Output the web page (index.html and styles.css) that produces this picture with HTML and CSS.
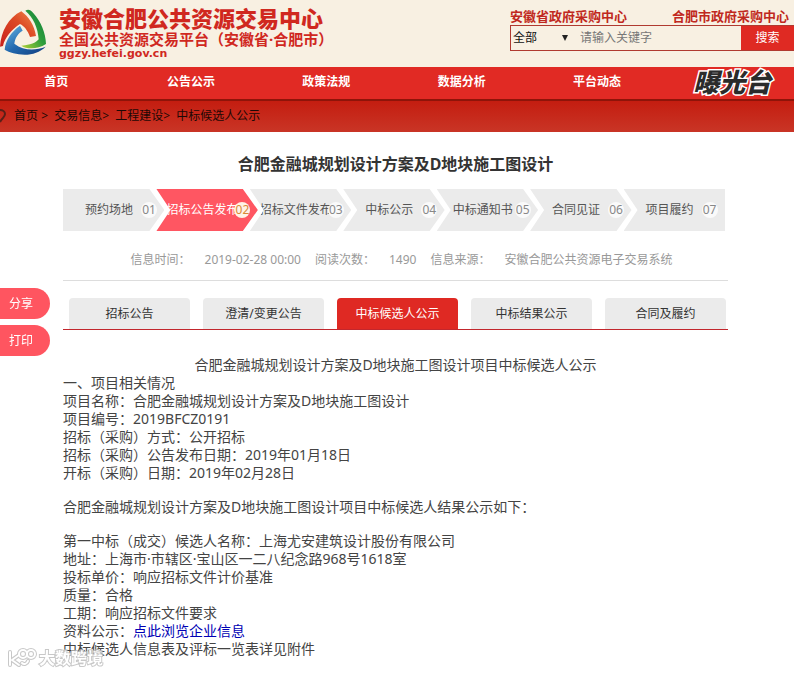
FILE: index.html
```
<!DOCTYPE html>
<html lang="zh-CN">
<head>
    <meta charset="UTF-8">
    <meta name="viewport" content="width=device-width, initial-scale=1.0">
    <title>安徽合肥公共资源交易中心</title>
    <link rel="stylesheet" href="styles.css">
</head>
<body>
    <header class="header">
        <a class="brand" href="#">
            <svg class="logo" viewBox="0 22 141 144" aria-hidden="true">
                <defs>
                    <linearGradient id="red" x1="0" y1="1" x2="1" y2="0">
                        <stop offset="0" stop-color="#c8201c"/>
                        <stop offset="0.6" stop-color="#dd4a25"/>
                        <stop offset="1" stop-color="#f08a4a"/>
                    </linearGradient>
                    <linearGradient id="green" x1="0" y1="1" x2="1" y2="0">
                        <stop offset="0" stop-color="#b5d334"/>
                        <stop offset="0.5" stop-color="#2f9e3c"/>
                        <stop offset="1" stop-color="#0b7a3c"/>
                    </linearGradient>
                    <linearGradient id="blue" x1="0" y1="0" x2="1" y2="1">
                        <stop offset="0" stop-color="#69b6e4"/>
                        <stop offset="0.5" stop-color="#2268ae"/>
                        <stop offset="1" stop-color="#123c7e"/>
                    </linearGradient>
                </defs>
                <path fill="url(#red)" d="M0 138C3 92 26 50 64 32C86 48 103 74 108 106L90 109C84 90 72 76 60 70C36 86 14 110 9 136Z"/>
                <path fill="url(#green)" d="M76 30C84 24 92 27 99 36C124 64 137 96 138 130C112 147 80 146 64 135C76 134 104 132 116 116C114 82 100 50 76 30Z"/>
                <path fill="url(#blue)" d="M14 147C16 120 34 92 60 75L68 90C54 98 45 112 43 129C72 151 106 150 137 138C120 154 98 162 74 162C50 161 28 156 14 147Z"/>
            </svg>
            <span class="brand-text">
                <strong class="brand-name">安徽合肥公共资源交易中心</strong>
                <span class="brand-sub">全国公共资源交易平台（安徽省·合肥市）</span>
                <span class="brand-url">ggzy.hefei.gov.cn</span>
            </span>
        </a>
        <div class="header-right">
            <div class="centers">
                <a href="#">安徽省政府采购中心</a>
                <a href="#">合肥市政府采购中心</a>
            </div>
            <form class="search">
                <div class="select-wrap">
                    <select aria-label="搜索范围">
                        <option>全部</option>
                    </select>
                </div>
                <input type="text" placeholder="请输入关键字" aria-label="关键字">
                <button type="button">搜索</button>
            </form>
        </div>
    </header>

    <nav class="nav">
        <a href="#">首页</a>
        <a href="#">公告公示</a>
        <a href="#">政策法规</a>
        <a href="#">数据分析</a>
        <a href="#">平台动态</a>
        <a class="expose" href="#">曝光台</a>
    </nav>

    <div class="crumbs">
        <svg class="pin" viewBox="0 0 6 14" aria-hidden="true">
            <path d="M0 1C3 1 5 3 5 5C5 8 2 9 0 13" fill="none" stroke="#5a2018" stroke-width="2"/>
        </svg>
        <div><a href="#">首页</a> <span class="sep">&gt;</span><a href="#">交易信息</a><span class="sep">&gt;</span><a href="#">工程建设</a><span class="sep">&gt;</span><a href="#">中标候选人公示</a></div>
    </div>

    <main class="main">
        <h1>合肥金融城规划设计方案及D地块施工图设计</h1>

        <!-- 流程步骤 -->
        <ol class="steps">
            <li><span class="label">预约场地</span><span class="no">01</span></li>
            <li class="active"><span class="label">招标公告发布</span><span class="no">02</span></li>
            <li><span class="label">招标文件发布</span><span class="no">03</span></li>
            <li><span class="label">中标公示</span><span class="no">04</span></li>
            <li><span class="label">中标通知书</span><span class="no">05</span></li>
            <li><span class="label">合同见证</span><span class="no">06</span></li>
            <li><span class="label">项目履约</span><span class="no">07</span></li>
        </ol>

        <div class="info">
            <span>信息时间：</span><span>2019-02-28 00:00</span>
            <span>阅读次数：</span><span>1490</span>
            <span>信息来源：</span><span>安徽合肥公共资源电子交易系统</span>
        </div>

        <div class="tabs">
            <button type="button">招标公告</button>
            <button type="button">澄清/变更公告</button>
            <button type="button" class="active">中标候选人公示</button>
            <button type="button">中标结果公示</button>
            <button type="button">合同及履约</button>
        </div>

        <article class="content">
            <h2>合肥金融城规划设计方案及D地块施工图设计项目中标候选人公示</h2>
            <p>
                一、项目相关情况<br>
                项目名称：合肥金融城规划设计方案及D地块施工图设计<br>
                项目编号：2019BFCZ0191<br>
                招标（采购）方式：公开招标<br>
                招标（采购）公告发布日期：2019年01月18日<br>
                开标（采购）日期：2019年02月28日
            </p>
            <p>合肥金融城规划设计方案及D地块施工图设计项目中标候选人结果公示如下：</p>
            <p>
                第一中标（成交）候选人名称：上海尤安建筑设计股份有限公司<br>
                地址：上海市·市辖区·宝山区一二八纪念路968号1618室<br>
                投标单价：响应招标文件计价基准<br>
                质量：合格<br>
                工期：响应招标文件要求<br>
                资料公示：<a href="#">点此浏览企业信息</a><br>
                中标候选人信息表及评标一览表详见附件
            </p>
        </article>
    </main>

    <div class="side">
        <button type="button">分享</button>
        <button type="button">打印</button>
    </div>

    <div class="watermark">
        <svg viewBox="0 0 30 22" aria-hidden="true">
            <g fill="none" stroke-linecap="round" stroke-linejoin="round">
                <g stroke="#bbb" stroke-width="4">
                    <path d="M3 5V18M12 8L5 13L12 18"/>
                    <circle cx="16" cy="7" r="4"/>
                    <circle cx="24" cy="7" r="4"/>
                    <path d="M15 16C17 18 20 17 21 14"/>
                </g>
                <g stroke="#fff" stroke-width="2">
                    <path d="M3 5V18M12 8L5 13L12 18"/>
                    <circle cx="16" cy="7" r="4"/>
                    <circle cx="24" cy="7" r="4"/>
                    <path d="M15 16C17 18 20 17 21 14"/>
                </g>
            </g>
        </svg>
        <span>大数跨境</span>
    </div>
</body>
</html>
```
FILE: styles.css
```
* {
    box-sizing: border-box;
}

body {
    margin: 0;
    min-height: 100vh;
    background: #fff;
    color: #444;
    font-family: "Noto Sans", "Noto Sans CJK SC", sans-serif;
    font-size: 12px;
    line-height: 18px;
    overflow-x: hidden;
}

a {
    color: inherit;
    text-decoration: none;
}

button, input, select {
    font: inherit;
    border: 0;
    padding: 0;
    margin: 0;
    background: none;
}

button {
    cursor: pointer;
}

/* 页头 */
.header {
    display: flex;
    justify-content: space-between;
    height: 67px;
    background: #f8f0e2;
}

.brand {
    display: flex;
    gap: 12px;
    padding-top: 7px;
    color: #d0281f;
    white-space: nowrap;
}

.logo {
    width: 47px;
    height: 48px;
    margin-top: 1px;
}

.brand-text {
    display: flex;
    flex-direction: column;
    font-weight: 700;
}

.brand-name {
    font-size: 22px;
    font-weight: 900;
    line-height: 23px;
}

.brand-sub {
    font-size: 15px;
    line-height: 18px;
}

.brand-url {
    font-family: "DejaVu Sans", sans-serif;
    font-size: 11px;
    line-height: 11px;
}

.header-right {
    width: 284px;
    padding-top: 8px;
}

.centers {
    display: flex;
    gap: 45px;
    height: 17px;
    line-height: 17px;
    font-size: 13px;
    font-weight: 700;
    color: #c02820;
    white-space: nowrap;
}

.search {
    display: flex;
    height: 26px;
    border: 1px solid #b03a30;
    border-right: 0;
}

.select-wrap {
    position: relative;
    width: 68px;
}

.select-wrap::after {
    content: "";
    position: absolute;
    top: 9px;
    right: 11px;
    border: 3px solid transparent;
    border-top: 6px solid #222;
    border-bottom: 0;
    pointer-events: none;
}

.search select {
    appearance: none;
    width: 100%;
    height: 100%;
    padding-left: 2px;
    color: #111;
}

.search input {
    flex: 1;
    min-width: 0;
    padding-left: 1px;
    color: #333;
}

.search input::placeholder {
    color: #777;
}

.search button {
    width: 53px;
    background: #df2a23;
    color: #fff;
}

/* 导航 */
.nav {
    display: flex;
    height: 32px;
    margin-right: -6px;
    background: #e12a24;
    color: #fff;
    font-weight: 700;
    line-height: 30px;
    text-align: center;
}

.nav a {
    flex: 1 1 135px;
}

.nav a:first-child {
    flex: 1 1 112px;
    margin-right: 11px;
}

.nav .expose {
    color: #2b2b2b;
    font-size: 26px;
    font-style: italic;
    font-weight: 900;
    white-space: nowrap;
    -webkit-text-stroke: 3px #fff;
    paint-order: stroke fill;
}

.crumbs {
    display: flex;
    align-items: center;
    gap: 8px;
    height: 33px;
    padding-bottom: 2px;
    border-top: 2px solid #8e1409;
    background: linear-gradient(#c41d10, #c93526);
    color: #1e0805;
}

.pin {
    width: 6px;
    height: 14px;
}

.sep {
    display: inline-block;
    width: 13px;
}

/* 正文 */
.main {
    padding: 20px 66px 16px 63px;
}

h1 {
    margin: 0 0 13px;
    color: #333;
    font-size: 16px;
    line-height: 24px;
    text-align: center;
}

.steps {
    display: flex;
    margin: 0 3px 0 0;
    padding: 0;
    list-style: none;
}

.steps li {
    display: flex;
    flex: 1;
    align-items: center;
    height: 42px;
    margin-left: -8px;
    padding-left: 10px;
    background: #ebebeb;
    color: #555;
    white-space: nowrap;
    clip-path: polygon(0 0, calc(100% - 15px) 0, 100% 50%, calc(100% - 15px) 100%, 0 100%, 14px 50%);
}

.steps li:first-child {
    margin-left: 0;
    clip-path: polygon(0 0, calc(100% - 15px) 0, 100% 50%, calc(100% - 15px) 100%, 0 100%);
}

.steps li:last-child {
    clip-path: polygon(0 0, 100% 0, 100% 100%, 0 100%, 14px 50%);
}

.steps .label {
    width: 72px;
    margin-right: -4px;
    text-align: center;
}

.steps .no {
    width: 16px;
    height: 16px;
    border-radius: 50%;
    background: #fafafa;
    color: #888;
    line-height: 16px;
    text-align: center;
}

.steps .active {
    background: #ff5662;
    color: #fff;
}

.steps .active .no {
    background: #fff3e6;
    color: #d98836;
}

.info {
    display: flex;
    justify-content: center;
    gap: 14px;
    padding: 20px 0 11px 12px;
    border-bottom: 1px solid #ddd;
    color: #999;
    white-space: nowrap;
}

.tabs {
    display: flex;
    gap: 13px;
    margin-top: 17px;
    padding: 0 2px 0 6px;
    border-bottom: 1px solid #c2272d;
}

.tabs button {
    flex: 1;
    height: 31px;
    border-radius: 4px 4px 0 0;
    background: #ebebeb;
    color: #333;
}

/* 只作用于选中的标签 */
.tabs button.active {
    background: #df2923;
    color: #fff;
}

.content {
    padding-top: 26px;
    font-size: 14px;
}

.content h2 {
    margin: 0;
    font-size: 14px;
    font-weight: 400;
    text-align: center;
}

.content p {
    margin: 0 0 16px;
}

.content p a {
    color: #0000b4;
}

/* 左侧悬浮按钮 */
.side {
    position: fixed;
    top: 288px;
    left: 0;
    display: flex;
    flex-direction: column;
    gap: 6px;
}

.side button {
    width: 50px;
    height: 31px;
    padding-left: 9px;
    border-radius: 0 16px 16px 0;
    background: #ff5560;
    color: #fff;
    text-align: left;
}

.watermark {
    position: fixed;
    bottom: 5px;
    left: 7px;
    display: flex;
    align-items: center;
    gap: 2px;
    color: #fff;
    font-size: 16px;
    font-weight: 700;
    line-height: 22px;
    -webkit-text-stroke: 2px #bbb;
    paint-order: stroke fill;
    opacity: 0.8;
}

.watermark svg {
    width: 30px;
    height: 22px;
}
```
